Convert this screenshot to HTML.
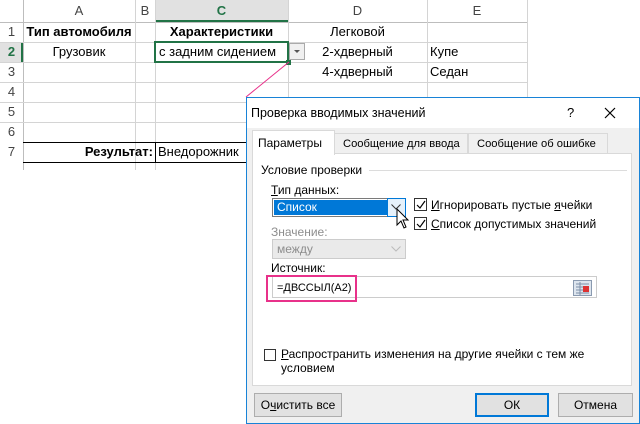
<!DOCTYPE html><html><head><meta charset="utf-8"><style>
*{margin:0;padding:0;box-sizing:border-box}
body{width:640px;height:424px;background:#fff;position:relative;overflow:hidden;font-family:"Liberation Sans","DejaVu Sans",sans-serif;font-size:13px;color:#000}
.a{position:absolute}
.t{position:absolute;white-space:nowrap;line-height:20px}
.vl{position:absolute;width:1px;background:#d4d4d4}
.hl{position:absolute;height:1px;background:#d4d4d4}
.d{font-family:"Liberation Sans",sans-serif;font-size:12px}
.cb{position:absolute;width:13px;height:13px;border:1px solid #333;background:#fff}
.btn{position:absolute;height:24px;background:#e1e1e1;border:1px solid #adadad;text-align:center;line-height:22px}
</style></head><body>
<div class="a" style="left:155px;top:0;width:133px;height:22px;background:#e1e1e1;border-bottom:2px solid #217346"></div>
<div class="a" style="left:0;top:42px;width:23px;height:20px;background:#e1e1e1;border-right:2px solid #217346"></div>
<div class="hl" style="left:0;top:22px;width:527px;background:#bdbdbd"></div>
<div class="vl" style="left:23px;top:0;height:170px;background:#bdbdbd"></div>
<div class="t" style="left:23px;width:112px;top:1px;text-align:center;color:#444">A</div>
<div class="t" style="left:135px;width:20px;top:1px;text-align:center;color:#444">B</div>
<div class="t" style="left:155px;width:133px;top:1px;text-align:center;color:#217346;font-weight:bold">C</div>
<div class="t" style="left:288px;width:139px;top:1px;text-align:center;color:#444">D</div>
<div class="t" style="left:427px;width:100px;top:1px;text-align:center;color:#444">E</div>
<div class="t" style="left:0;width:23px;top:22px;text-align:center;color:#444">1</div>
<div class="t" style="left:0;width:23px;top:42px;text-align:center;color:#217346;font-weight:bold">2</div>
<div class="t" style="left:0;width:23px;top:62px;text-align:center;color:#444">3</div>
<div class="t" style="left:0;width:23px;top:82px;text-align:center;color:#444">4</div>
<div class="t" style="left:0;width:23px;top:102px;text-align:center;color:#444">5</div>
<div class="t" style="left:0;width:23px;top:122px;text-align:center;color:#444">6</div>
<div class="t" style="left:0;width:23px;top:142px;text-align:center;color:#444">7</div>
<div class="vl" style="left:135px;top:0;height:170px"></div>
<div class="vl" style="left:155px;top:0;height:170px"></div>
<div class="vl" style="left:288px;top:0;height:170px"></div>
<div class="vl" style="left:427px;top:0;height:170px"></div>
<div class="vl" style="left:527px;top:0;height:170px"></div>
<div class="hl" style="left:0;top:42px;width:527px"></div>
<div class="hl" style="left:0;top:62px;width:527px"></div>
<div class="hl" style="left:0;top:82px;width:527px"></div>
<div class="hl" style="left:0;top:102px;width:527px"></div>
<div class="hl" style="left:0;top:122px;width:527px"></div>
<div class="a" style="left:23px;top:142px;width:230px;height:1px;background:#000"></div>
<div class="a" style="left:23px;top:162px;width:230px;height:1px;background:#000"></div>
<div class="a" style="left:155px;top:142px;width:1px;height:21px;background:#000"></div>
<div class="t" style="left:23px;width:112px;top:22px;text-align:center;font-weight:bold">Тип автомобиля</div>
<div class="t" style="left:155px;width:133px;top:22px;text-align:center;font-weight:bold">Характеристики</div>
<div class="t" style="left:288px;width:139px;top:22px;text-align:center">Легковой</div>
<div class="t" style="left:23px;width:112px;top:42px;text-align:center">Грузовик</div>
<div class="a" style="left:154px;top:41px;width:135px;height:22px;border:2px solid #217346"></div>
<div class="a" style="left:286px;top:60px;width:5px;height:5px;background:#217346"></div>
<div class="t" style="left:159px;top:42px">с задним сидением</div>
<div class="a" style="left:289px;top:43px;width:16px;height:17px;background:#f0f0f0;border:1px solid #aaa"></div>
<div class="a" style="left:294px;top:50px;border-left:3px solid transparent;border-right:3px solid transparent;border-top:3px solid #555"></div>
<div class="t" style="left:288px;width:139px;top:42px;text-align:center">2-хдверный</div>
<div class="t" style="left:430px;top:42px">Купе</div>
<div class="t" style="left:288px;width:139px;top:62px;text-align:center">4-хдверный</div>
<div class="t" style="left:430px;top:62px">Седан</div>
<div class="t" style="left:23px;width:130px;top:142px;text-align:right;font-weight:bold">Результат:</div>
<div class="t" style="left:158px;top:142px">Внедорожник</div>
<svg class="a" style="left:0;top:0" width="640" height="424"><line x1="289" y1="62" x2="246" y2="97" stroke="#e8318a" stroke-width="1"/></svg>
<div class="a d" style="left:246px;top:97px;width:394px;height:327px;background:#f0f0f0;border:1px solid #1883d7">
<div class="a" style="left:0;top:0;width:392px;height:30px;background:#fff"></div>
<div class="t" style="left:4px;top:5px;font-size:12.5px">Проверка вводимых значений</div>
<div class="t" style="left:320px;top:5px;font-size:13px">?</div>
<svg class="a" style="left:357px;top:9px" width="12" height="12"><path d="M1 1L11 11M11 1L1 11" stroke="#000" stroke-width="1.2"/></svg>
<div class="a" style="left:5px;top:55px;width:380px;height:233px;background:#fff;border:1px solid #d9d9d9"></div>
<div class="a" style="left:87px;top:35px;width:134px;height:21px;background:#f0f0f0;border:1px solid #d9d9d9"></div>
<div class="a" style="left:221px;top:35px;width:140px;height:21px;background:#f0f0f0;border:1px solid #d9d9d9"></div>
<div class="t" style="left:96px;top:36px;font-size:11.2px">Сообщение для ввода</div>
<div class="t" style="left:230px;top:36px;font-size:11.2px">Сообщение об ошибке</div>
<div class="a" style="left:5px;top:32px;width:83px;height:25px;background:#fff;border:1px solid #d9d9d9;border-bottom:none"></div>
<div class="t" style="left:11px;top:35px">Параметры</div>
<div class="t" style="left:14px;top:62px">Условие проверки</div>
<div class="a" style="left:122px;top:72px;width:258px;height:1px;background:#dcdcdc"></div>
<div class="t" style="left:24px;top:82px"><u>Т</u>ип данных:</div>
<div class="a" style="left:25px;top:100px;width:134px;height:19px;border:1px solid #7a7a7a;background:#fff"></div>
<div class="a" style="left:27px;top:102px;width:114px;height:15px;background:#0078d7"></div>
<div class="t" style="left:30px;top:99px;color:#fff">Список</div>
<div class="a" style="left:140px;top:100px;width:19px;height:19px;border:1px solid #0078d7;background:#e5f1fb"></div>
<svg class="a" style="left:144px;top:106px" width="10" height="6"><path d="M0.5 0.5L5 5L9.5 0.5" fill="none" stroke="#333"/></svg>
<svg class="a" style="left:149px;top:110px" width="14" height="22"><path d="M1 1L1 17L5 13L8 20L10 19L7 12L12 12Z" fill="#fff" stroke="#000" stroke-width="1"/></svg>
<div class="cb" style="left:167px;top:100px"></div>
<svg class="a" style="left:169px;top:102px" width="10" height="10"><path d="M1 5L4 8L9 1" fill="none" stroke="#000" stroke-width="1.2"/></svg>
<div class="t" style="left:184px;top:97px"><u>И</u>гнорировать пустые <u>я</u>чейки</div>
<div class="cb" style="left:167px;top:119px"></div>
<svg class="a" style="left:169px;top:121px" width="10" height="10"><path d="M1 5L4 8L9 1" fill="none" stroke="#000" stroke-width="1.2"/></svg>
<div class="t" style="left:184px;top:116px"><u>С</u>писок допустимых значений</div>
<div class="t" style="left:24px;top:124px;color:#8d8d8d">Значение:</div>
<div class="a" style="left:25px;top:141px;width:134px;height:20px;border:1px solid #ccc;background:#eaeaea"></div>
<div class="t" style="left:30px;top:141px;color:#8d8d8d">между</div>
<svg class="a" style="left:144px;top:148px" width="10" height="6"><path d="M0.5 0.5L5 5L9.5 0.5" fill="none" stroke="#bbb"/></svg>
<div class="t" style="left:24px;top:160px">Источник:</div>
<div class="a" style="left:25px;top:178px;width:325px;height:22px;border:1px solid #ccc;background:#fff"></div>
<div class="t" style="left:30px;top:180px;font-size:11px">=ДВССЫЛ(A2)</div>
<svg class="a" style="left:326px;top:182px" width="19" height="16"><rect x="0.5" y="0.5" width="18" height="15" fill="#dde5ee" stroke="#8a9ab0"/><path d="M3 4H16M3 7H16M3 10H16M3 13H16M7 2V15" stroke="#7d90a8"/><rect x="10" y="6" width="6" height="6" fill="#d33"/></svg>
<div class="a" style="left:19px;top:177px;width:91px;height:27px;border:2px solid #e8318a"></div>
<div class="a" style="left:17px;top:251px;width:12px;height:12px;border:1px solid #333;background:#fff"></div>
<div class="t" style="left:34px;top:249px;line-height:14px"><u>Р</u>аспространить изменения на другие ячейки с тем же<br>условием</div>
<div class="btn" style="left:7px;top:295px;width:88px">О<u>ч</u>истить все</div>
<div class="btn" style="left:228px;top:295px;width:74px;border:2px solid #0078d7;line-height:20px">ОК</div>
<div class="btn" style="left:311px;top:295px;width:75px">Отмена</div>
</div>
</body></html>
